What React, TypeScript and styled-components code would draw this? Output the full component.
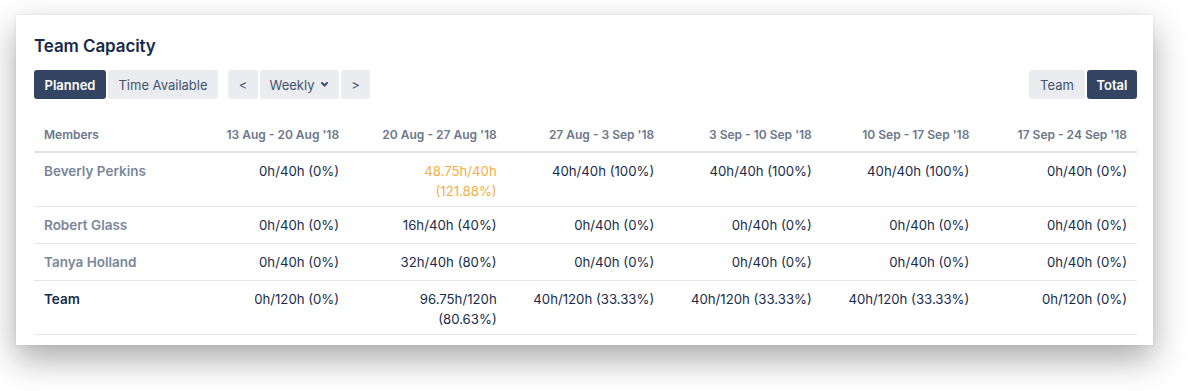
import React from "react";
import styled, { createGlobalStyle, css } from "styled-components";

const GlobalStyle = createGlobalStyle`
  html, body {
    margin: 0;
    padding: 0;
    background: #ffffff;
  }
  body {
    font-family: Inter, "Noto Sans", "Liberation Sans", sans-serif;
    color: #172b4d;
  }
`;

const Page = styled.div`
  width: 1200px;
  height: 391px;
  padding: 15px 0 0 16px;
  box-sizing: border-box;
  overflow: hidden;
`;

const Card = styled.section`
  width: 1137px;
  box-sizing: border-box;
  background: #ffffff;
  padding: 20px 16px 10px 18px;
  box-shadow: 0 14px 32px rgba(0, 0, 0, 0.34), 0 0 3px rgba(0, 0, 0, 0.08);
`;

const Title = styled.h2`
  margin: 0;
  font-size: 17px;
  line-height: 22px;
  font-weight: 600;
  color: #172b4d;
  letter-spacing: -0.1px;
`;

const Toolbar = styled.div`
  display: flex;
  align-items: center;
  justify-content: space-between;
  margin-top: 13px;
`;

const ToolbarLeft = styled.div`
  display: flex;
  gap: 10px;
`;

const ButtonGroup = styled.div`
  display: flex;
  gap: 2px;
`;

const Button = styled.button<{ $active?: boolean; $w?: number }>`
  height: 29px;
  padding: 0;
  border: none;
  border-radius: 3px;
  font-family: inherit;
  font-size: 13px;
  white-space: nowrap;
  display: flex;
  align-items: center;
  justify-content: center;
  gap: 6px;
  cursor: pointer;
  background: #ebecf0;
  color: #42526e;
  font-weight: 400;
  ${(p) =>
    p.$w &&
    css`
      width: ${p.$w}px;
    `}
  ${(p) =>
    p.$active &&
    css`
      background: #344563;
      color: #ffffff;
      font-weight: 600;
    `}
`;

const Table = styled.table`
  width: 100%;
  margin-top: 20px;
  border-collapse: collapse;
  table-layout: fixed;
`;

const HeadCell = styled.th<{ $left?: boolean }>`
  padding: 8px 10px 8px;
  font-size: 12px;
  line-height: 16px;
  font-weight: 600;
  color: #6b778c;
  text-align: ${(p) => (p.$left ? "left" : "right")};
  border-bottom: 2px solid #dfe1e6;
  white-space: nowrap;
`;

const Row = styled.tr`
  border-bottom: 1px solid #e4e6ea;
`;

const NameCell = styled.td<{ $team?: boolean }>`
  padding: 7px 10px 7px;
  vertical-align: top;
  font-size: 13.5px;
  line-height: 22px;
  font-weight: 600;
  color: ${(p) => (p.$team ? "#172b4d" : "#7a869a")};
  height: 22px;
`;

const ValueCell = styled.td<{ $over?: boolean }>`
  padding: 8px 10px 5px;
  vertical-align: top;
  text-align: right;
  font-size: 13.2px;
  line-height: 20px;
  white-space: pre-line;
  color: ${(p) => (p.$over ? "#f6ae3f" : "#172b4d")};
`;

const Chevron = () => (
  <svg width="9" height="9" viewBox="0 0 10 10" aria-hidden="true">
    <path
      d="M2.2 3.4 L5 6.2 L7.8 3.4"
      fill="none"
      stroke="#42526e"
      strokeWidth="2.4"
      strokeLinecap="round"
      strokeLinejoin="round"
    />
  </svg>
);

const weeks = [
  "13 Aug - 20 Aug '18",
  "20 Aug - 27 Aug '18",
  "27 Aug - 3 Sep '18",
  "3 Sep - 10 Sep '18",
  "10 Sep - 17 Sep '18",
  "17 Sep - 24 Sep '18",
];

type Member = {
  name: string;
  team?: boolean;
  values: { text: string; over?: boolean }[];
};

const members: Member[] = [
  {
    name: "Beverly Perkins",
    values: [
      { text: "0h/40h (0%)" },
      { text: "48.75h/40h\n(121.88%)", over: true },
      { text: "40h/40h (100%)" },
      { text: "40h/40h (100%)" },
      { text: "40h/40h (100%)" },
      { text: "0h/40h (0%)" },
    ],
  },
  {
    name: "Robert Glass",
    values: [
      { text: "0h/40h (0%)" },
      { text: "16h/40h (40%)" },
      { text: "0h/40h (0%)" },
      { text: "0h/40h (0%)" },
      { text: "0h/40h (0%)" },
      { text: "0h/40h (0%)" },
    ],
  },
  {
    name: "Tanya Holland",
    values: [
      { text: "0h/40h (0%)" },
      { text: "32h/40h (80%)" },
      { text: "0h/40h (0%)" },
      { text: "0h/40h (0%)" },
      { text: "0h/40h (0%)" },
      { text: "0h/40h (0%)" },
    ],
  },
  {
    name: "Team",
    team: true,
    values: [
      { text: "0h/120h (0%)" },
      { text: "96.75h/120h\n(80.63%)" },
      { text: "40h/120h (33.33%)" },
      { text: "40h/120h (33.33%)" },
      { text: "40h/120h (33.33%)" },
      { text: "0h/120h (0%)" },
    ],
  },
];

export default function App() {
  return (
    <>
      <GlobalStyle />
      <Page>
        <Card>
          <Title>Team Capacity</Title>
          <Toolbar>
            <ToolbarLeft>
              <ButtonGroup>
                <Button $active $w={72}>Planned</Button>
                <Button $w={110}>Time Available</Button>
              </ButtonGroup>
              <ButtonGroup>
                <Button $w={30}>&lt;</Button>
                <Button $w={79}>
                  Weekly <Chevron />
                </Button>
                <Button $w={29}>&gt;</Button>
              </ButtonGroup>
            </ToolbarLeft>
            <ButtonGroup>
              <Button $w={56}>Team</Button>
              <Button $active $w={50}>Total</Button>
            </ButtonGroup>
          </Toolbar>
          <Table>
            <thead>
              <tr>
                <HeadCell $left>Members</HeadCell>
                {weeks.map((w) => (
                  <HeadCell key={w}>{w}</HeadCell>
                ))}
              </tr>
            </thead>
            <tbody>
              {members.map((m) => (
                <Row key={m.name}>
                  <NameCell $team={m.team}>{m.name}</NameCell>
                  {m.values.map((v, i) => (
                    <ValueCell key={i} $over={v.over}>
                      {v.text}
                    </ValueCell>
                  ))}
                </Row>
              ))}
            </tbody>
          </Table>
        </Card>
      </Page>
    </>
  );
}
